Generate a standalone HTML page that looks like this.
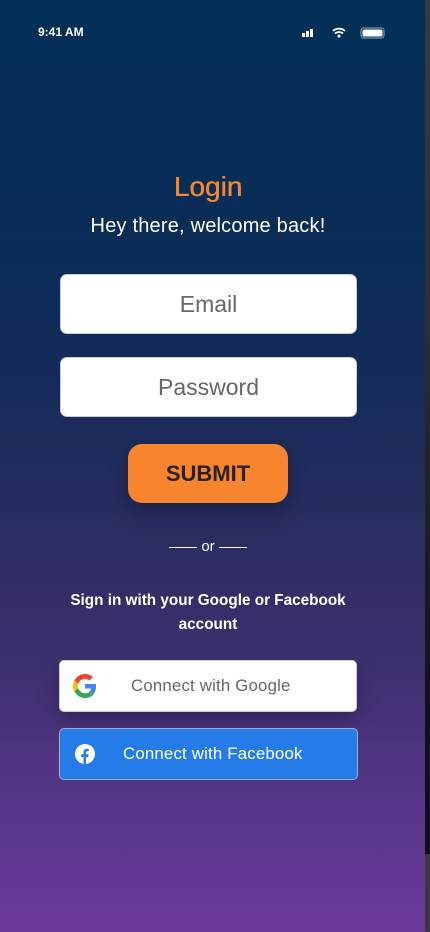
<!DOCTYPE html><html><head><style>
body{margin:0;width:430px;height:932px;overflow:hidden;position:relative;font-family:"Liberation Sans",sans-serif;
background:linear-gradient(180deg,#042f57 0%,#052e58 15%,#142b59 40%,#2c2d62 58%,#3e3070 72%,#56368a 86%,#6c3a98 100%);}
.strip{position:absolute;right:0;top:0;width:5px;height:932px;background:linear-gradient(180deg,#3a3a3a 0%,#2e2e30 35%,#15151a 70%,#0f0f12 91.6%,#3a3a3a 91.7%);}
.c{position:absolute;left:0;width:416px;text-align:center}
.inp{position:absolute;left:60px;width:295px;height:58px;background:#fff;border:1px solid #ccc;border-radius:7px;text-align:center;line-height:58px;font-size:23px;color:#666}
.btn{position:absolute;left:59px;width:296px;height:50px;border-radius:5px;line-height:50px;font-size:16.8px;letter-spacing:0.2px}
</style></head><body>
<div class="strip"></div>
<div style="position:absolute;left:38px;top:25px;color:#fff;font-size:12px;font-weight:bold">9:41 AM</div>
<svg style="position:absolute;left:301px;top:27px" width="86" height="12">
<rect x="1" y="6" width="3" height="4" fill="#fff"/><rect x="5" y="4" width="3" height="6" fill="#fff"/><rect x="9" y="2" width="3" height="8" fill="#fff"/>
<path d="M32 4a9 9 0 0 1 12 0M34 6.5a6 6 0 0 1 8 0" stroke="#fff" stroke-width="1.8" fill="none"/><circle cx="38" cy="9" r="1.5" fill="#fff"/>
<rect x="60" y="1" width="23" height="10" rx="2.5" fill="none" stroke="#9ab" stroke-width="1"/><rect x="61.5" y="2.5" width="20" height="7" rx="1.5" fill="#fff"/>
</svg>
<div class="c" style="top:171px;color:#f5872c;font-size:28px;font-weight:bold;-webkit-text-stroke:0;font-weight:normal;text-shadow:0.4px 0 0 #f5872c">Login</div>
<div class="c" style="top:215px;color:#fff;font-size:20px;letter-spacing:0.2px">Hey there, welcome back!</div>
<div class="inp" style="top:274px">Email</div>
<div class="inp" style="top:357px">Password</div>
<div style="position:absolute;left:128px;top:444px;width:160px;height:59px;border-radius:14px;background:#f7852d;box-shadow:0 8px 20px rgba(0,0,0,.3);text-align:center;line-height:59px;font-weight:bold;font-size:22px;color:#2a2222">SUBMIT</div>
<div class="c" style="top:538px;color:#fff;font-size:15px"><span style="display:inline-block;width:28px;border-top:1px solid #fff;vertical-align:middle"></span> or <span style="display:inline-block;width:28px;border-top:1px solid #fff;vertical-align:middle"></span></div>
<div class="c" style="top:589px;color:#fff;font-size:15.3px;font-weight:bold;line-height:24px;letter-spacing:0px">Sign in with your Google or Facebook<br>account</div>
<div class="btn" style="top:660px;background:#fff;border:1px solid #ccc;color:#666;box-shadow:0 8px 20px rgba(0,0,0,.25)">
<svg style="position:absolute;left:13px;top:13px" width="24" height="24" viewBox="0 0 48 48"><path fill="#EA4335" d="M24 9.5c3.5 0 6.6 1.2 9.1 3.6l6.8-6.8C35.8 2.4 30.3 0 24 0 14.6 0 6.6 5.4 2.6 13.2l7.9 6.2C12.4 13.7 17.7 9.5 24 9.5z"/><path fill="#4285F4" d="M46.1 24.5c0-1.6-.1-3.1-.4-4.5H24v9h12.4c-.5 2.9-2.2 5.300-4.6 6.9l7.7 6c4.5-4.1 6.6-10.2 6.6-17.4z"/><path fill="#FBBC05" d="M10.5 28.6c-.5-1.4-.8-3-.8-4.6s.3-3.2.8-4.6l-7.9-6.2C.9 16.5 0 20.1 0 24s.9 7.5 2.6 10.8l7.9-6.2z"/><path fill="#34A853" d="M24 48c6.5 0 11.9-2.1 15.9-5.8l-7.7-6c-2.2 1.5-5 2.3-8.2 2.3-6.3 0-11.6-4.2-13.5-9.9l-7.9 6.2C6.6 42.6 14.6 48 24 48z"/></svg>
<span style="position:absolute;left:71px">Connect with Google</span></div>
<div class="btn" style="top:728px;width:297px;background:#257ce9;border:1px solid #aac;color:#fff">
<svg style="position:absolute;left:15px;top:15px" width="20" height="20" viewBox="0 0 20 20"><circle cx="10" cy="10" r="10" fill="#fff"/><path d="M11 20v-7h2.3l.4-2.7H11V8.6c0-.8.3-1.3 1.4-1.3h1.4V4.9c-.3 0-1.1-.1-2-.1-2 0-3.3 1.2-3.3 3.4v2.1H6.2V13h2.3v7z" fill="#257ce9"/></svg>
<span style="position:absolute;left:63px">Connect with Facebook</span></div>
</body></html>
